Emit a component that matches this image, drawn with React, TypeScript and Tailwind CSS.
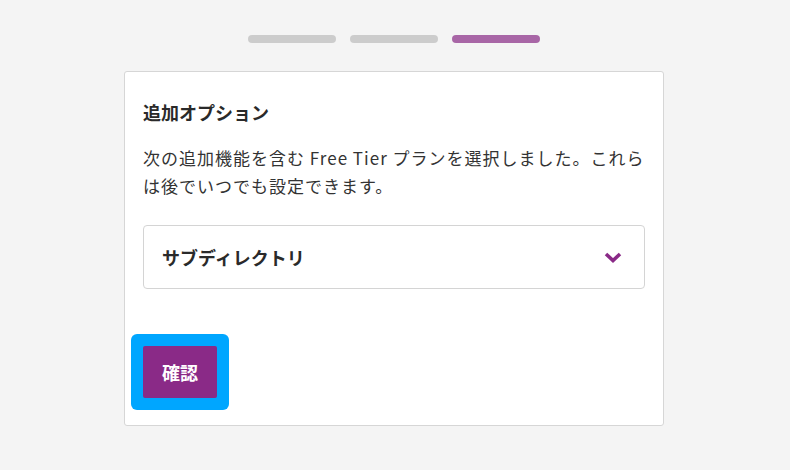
import React from "react";

export default function App() {
  return (
    <div
      className="min-h-[470px] w-full bg-[#f4f4f4] pt-[35px] pr-[2px]"
      style={{ fontFamily: '"Noto Sans CJK JP", "Noto Sans", sans-serif' }}
    >
      <div className="flex justify-center gap-[14px]">
        <div className="h-[8px] w-[88px] rounded-full bg-[#cccccc]" />
        <div className="h-[8px] w-[88px] rounded-full bg-[#cccccc]" />
        <div className="h-[8px] w-[88px] rounded-full bg-[#a866a6]" />
      </div>
      <div className="mx-auto mt-[28px] w-[540px] rounded-[3px] border border-[#d6d6d6] bg-white px-[18px] pb-[15px] pt-[28px]">
        <h2 className="text-[18px] font-bold leading-[24px] text-[#2a2a2a]">追加オプション</h2>
        <p className="mt-[20px] text-[17px] leading-[28px] tracking-[1px] text-[#333333]">
          次の追加機能を含む Free Tier プランを選択しました。これらは後でいつでも設定できます。
        </p>
        <div className="mt-[25px] flex h-[64px] items-center justify-between rounded-[4px] border border-[#d4d4d4] px-[18px]">
          <span className="text-[18px] font-bold text-[#2a2a2a]">サブディレクトリ</span>
          <svg width="18" height="11" viewBox="0 0 18 11" className="mr-[4px]">
            <polyline
              points="2,2 9,8.5 16,2"
              fill="none"
              stroke="#8a2a87"
              strokeWidth="3.6"
              strokeLinecap="butt"
              strokeLinejoin="miter"
            />
          </svg>
        </div>
        <div className="mt-[45px] -ml-[12px] flex w-fit rounded-[6px] bg-[#00a6ff] p-[12px]">
          <button className="h-[52px] w-[74px] rounded-[2px] bg-[#8a2a87] text-[18px] font-bold text-white">
            確認
          </button>
        </div>
      </div>
    </div>
  );
}
